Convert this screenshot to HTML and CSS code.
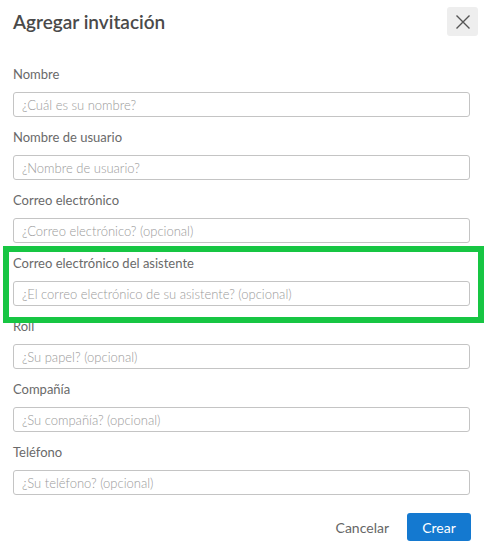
FILE: index.html
```html
<!DOCTYPE html>
<html lang="es">
<head>
    <meta charset="UTF-8">
    <meta name="viewport" content="width=device-width, initial-scale=1.0">
    <title>Agregar invitación</title>
    <link rel="stylesheet" href="styles.css">
</head>
<body>
    <div class="modal">
        <header class="modal-header">
            <h1>Agregar invitación</h1>
            <button class="close-button" aria-label="Cerrar">
                <svg width="16" height="16" viewBox="0 0 16 16">
                    <path d="M1.5 1.5 L14.5 14.5 M14.5 1.5 L1.5 14.5" stroke="#555" stroke-width="1.4" fill="none"/>
                </svg>
            </button>
        </header>
        <form class="modal-body">
            <div class="field">
                <label for="nombre">Nombre</label>
                <input type="text" id="nombre" placeholder="¿Cuál es su nombre?">
            </div>
            <div class="field">
                <label for="usuario">Nombre de usuario</label>
                <input type="text" id="usuario" placeholder="¿Nombre de usuario?">
            </div>
            <div class="field">
                <label for="correo">Correo electrónico</label>
                <input type="text" id="correo" placeholder="¿Correo electrónico? (opcional)">
            </div>
            <div class="field highlighted">
                <label for="asistente">Correo electrónico del asistente</label>
                <input type="text" id="asistente" placeholder="¿El correo electrónico de su asistente? (opcional)">
            </div>
            <div class="field">
                <label for="roll">Roll</label>
                <input type="text" id="roll" placeholder="¿Su papel? (opcional)">
            </div>
            <div class="field">
                <label for="compania">Compañía</label>
                <input type="text" id="compania" placeholder="¿Su compañía? (opcional)">
            </div>
            <div class="field">
                <label for="telefono">Teléfono</label>
                <input type="text" id="telefono" placeholder="¿Su teléfono? (opcional)">
            </div>
            <div class="modal-footer">
                <a href="#" class="cancel-button">Cancelar</a>
                <button type="button" class="create-button">Crear</button>
            </div>
        </form>
    </div>
</body>
</html>
```

FILE: styles.css
```css
body {
    font-family: Lato, "Open Sans", Arial, sans-serif;
    background: #ffffff;
    color: #444;
    margin: 0;
    padding: 0;
}
.modal {
    width: 486px;
}
.modal-header {
    display: flex;
    justify-content: space-between;
    align-items: flex-start;
    padding: 7px 8px 0 13px;
    height: 58px;
    box-sizing: border-box;
}
h1 {
    margin: 3px 0 0 0;
    font-size: 19px;
    font-weight: 600;
    line-height: 23px;
    color: #4a4a4a;
}
.close-button {
    width: 31px;
    height: 29px;
    background: #eeeeee;
    border: none;
    border-radius: 3px;
    padding: 0;
    display: flex;
    align-items: center;
    justify-content: center;
}
.modal-body {
    padding: 7px 16px 0 13px;
}
.field {
    display: flex;
    flex-direction: column;
    margin-bottom: 11px;
}
.field label {
    font-size: 13px;
    line-height: 18px;
    color: #6a6a6a;
    margin-bottom: 9px;
}
.field input {
    height: 25px;
    box-sizing: border-box;
    border: 1px solid #c4c4c4;
    border-radius: 3px;
    padding: 0 8px;
    font-family: inherit;
    font-size: 13px;
    font-weight: 300;
    color: #444;
}
.field input::placeholder {
    color: #9a9a9a;
}
.highlighted {
    position: relative;
}
/* green annotation frame drawn over the field */
.highlighted::after {
    content: "";
    position: absolute;
    top: -8px;
    left: -10px;
    right: -14px;
    bottom: -17px;
    border: 6px solid #17c643;
    pointer-events: none;
}
.modal-footer {
    display: flex;
    justify-content: flex-end;
    align-items: center;
    gap: 18px;
    margin-top: 18px;
}
.cancel-button {
    color: #666;
    text-decoration: none;
    font-size: 14px;
}
.create-button {
    width: 64px;
    height: 28px;
    margin-right: -1px;
    background: #1479d0;
    color: white;
    border: none;
    border-radius: 3px;
    font-family: inherit;
    font-size: 14px;
}
```
